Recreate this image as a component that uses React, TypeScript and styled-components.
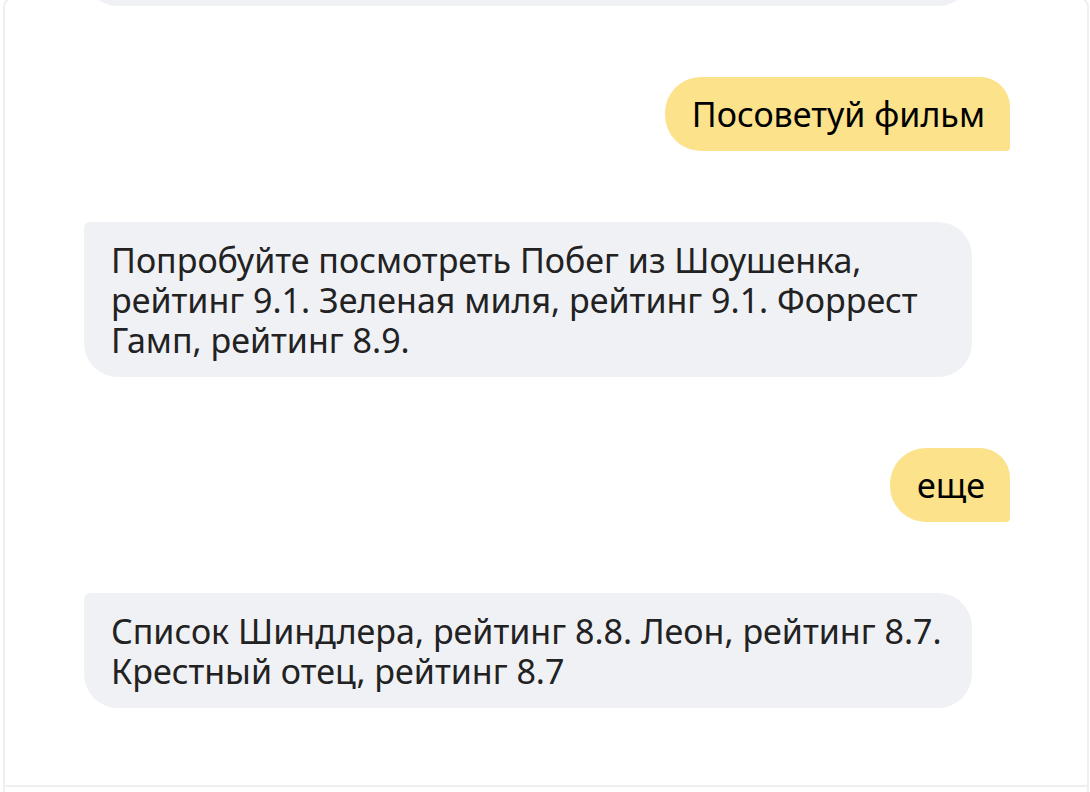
import React from "react";
import styled, { createGlobalStyle } from "styled-components";

const GlobalStyle = createGlobalStyle`
  html, body {
    margin: 0;
    padding: 0;
    background: #ffffff;
    overflow: hidden;
  }
  body {
    font-family: "Noto Sans", "Open Sans", Arial, sans-serif;
  }
`;

const Panel = styled.div`
  width: 1082px;
  height: 800px;
  margin: -3px 0 0 3px;
  border: 2px solid #efefef;
  border-radius: 10px;
  background: #ffffff;
  display: flex;
  flex-direction: column;
  overflow: hidden;
`;

const Messages = styled.div`
  height: 786px;
  flex: none;
  display: flex;
  flex-direction: column;
  justify-content: flex-end;
  gap: 71px;
  padding: 0 77px 77px 79px;
  box-sizing: border-box;
  overflow: hidden;
`;

const Footer = styled.div`
  flex: 1;
  border-top: 2px solid #efefef;
`;

const Row = styled.div<{ $mine?: boolean }>`
  display: flex;
  justify-content: ${(p) => (p.$mine ? "flex-end" : "flex-start")};
  flex: none;
`;

const Bubble = styled.div<{ $mine?: boolean }>`
  box-sizing: border-box;
  font-size: 34px;
  line-height: 40px;
  padding: ${(p) => (p.$mine ? "17px 25px 17px 27px" : "18px 27px 17px 27px")};
  ${(p) =>
    p.$mine
      ? `
    background: #fbe28b;
    color: #000000;
    border-radius: 36px 30px 4px 36px;
  `
      : `
    background: #f0f1f5;
    color: #222222;
    width: 888px;
    border-radius: 6px 34px 34px 34px;
  `}
`;

const EarlierBubble = styled.div`
  width: 888px;
  height: 120px;
  background: #f0f1f5;
  border-radius: 6px 34px 34px 34px;
`;

type Msg = { mine?: boolean; text: string };

const messages: Msg[] = [
  { mine: true, text: "Посоветуй фильм" },
  {
    text: "Попробуйте посмотреть Побег из Шоушенка, рейтинг 9.1. Зеленая миля, рейтинг 9.1. Форрест Гамп, рейтинг 8.9.",
  },
  { mine: true, text: "еще" },
  {
    text: "Список Шиндлера, рейтинг 8.8. Леон, рейтинг 8.7. Крестный отец, рейтинг 8.7",
  },
];

export default function App() {
  return (
    <>
      <GlobalStyle />
      <Panel>
        <Messages>
          <Row>
            <EarlierBubble aria-hidden="true" />
          </Row>
          {messages.map((m, i) => (
            <Row key={i} $mine={m.mine}>
              <Bubble $mine={m.mine}>{m.text}</Bubble>
            </Row>
          ))}
        </Messages>
        <Footer />
      </Panel>
    </>
  );
}
